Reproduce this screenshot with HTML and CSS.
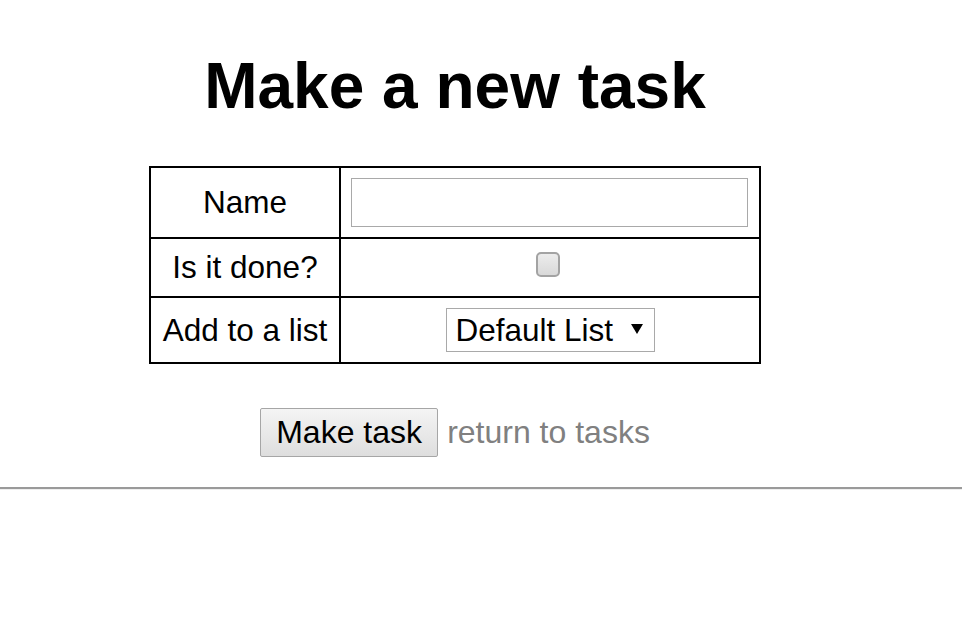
FILE: index.html
```html
<!DOCTYPE html>
<html lang="en">
<head>
<meta charset="utf-8">
<title>Make a new task</title>
<link rel="stylesheet" href="styles.css">
</head>
<body>
<main class="page">
  <h1 class="title">Make a new task</h1>
  <form class="task-form">
    <table class="task-table">
      <tr class="row-name">
        <td class="label">Name</td>
        <td class="field"><input class="text-input" type="text"></td>
      </tr>
      <tr class="row-done">
        <td class="label">Is it done?</td>
        <td class="field"><input class="check" type="checkbox"></td>
      </tr>
      <tr class="row-list">
        <td class="label">Add to a list</td>
        <td class="field"><span class="select-wrap"><select class="list-select"><option>Default List</option></select></span></td>
      </tr>
    </table>
    <div class="actions">
      <button class="submit" type="submit">Make task</button>
      <a class="back" href="#">return to tasks</a>
    </div>
  </form>
</main>
<hr class="rule">
</body>
</html>
```

FILE: styles.css
```css
html, body {
  margin: 0;
  padding: 0;
  background: #ffffff;
}

body {
  font-family: "Liberation Sans", Arial, sans-serif;
  color: #000;
}

.page {
  width: 910px;
  text-align: center;
}

.title {
  font-size: 64px;
  font-weight: bold;
  line-height: 74px;
  margin: 49px 0 43px;
}

.task-form {
  display: flex;
  flex-direction: column;
  align-items: center;
}

.task-table {
  width: 612px;
  border: 1px solid #000;
  border-spacing: 0;
  font-size: 31.5px;
}

.task-table td {
  border: 1px solid #000;
  box-sizing: border-box;
  padding: 0 10px;
  text-align: center;
  vertical-align: middle;
}

.task-table .label {
  width: 190px;
}

.row-name td { height: 71px; }
.row-done td { height: 59px; }
.row-list td { height: 66px; }

.text-input {
  display: block;
  box-sizing: border-box;
  width: 397px;
  height: 49px;
  margin: 0;
  border: 1px solid #a9a9a9;
  font: inherit;
  padding: 0 6px;
}

.check {
  appearance: none;
  -webkit-appearance: none;
  display: block;
  margin: -6px auto 0;
  width: 24px;
  height: 25px;
  box-sizing: border-box;
  border: 2px solid #a3a3a3;
  border-radius: 5px;
  background: linear-gradient(#ececec, #d9d9d9);
  position: relative;
  left: -2px;
}

.select-wrap {
  display: inline-block;
  position: relative;
  vertical-align: middle;
}

.select-wrap::after {
  content: "";
  position: absolute;
  right: 12px;
  top: 16px;
  border-left: 6px solid transparent;
  border-right: 6px solid transparent;
  border-top: 10px solid #000;
  pointer-events: none;
}

.list-select {
  appearance: none;
  -webkit-appearance: none;
  box-sizing: border-box;
  width: 209px;
  height: 44px;
  margin: 0;
  padding: 0 30px 0 9px;
  border: 1px solid #a9a9a9;
  border-radius: 0;
  background: #fff;
  font: inherit;
  color: #000;
}

.actions {
  display: flex;
  align-items: center;
  gap: 9px;
  margin-top: 44px;
  margin-bottom: 30px;
  font-size: 32px;
}

.submit {
  box-sizing: border-box;
  height: 49px;
  width: 178px;
  padding: 0;
  margin: 0;
  border: 1px solid #a6a6a6;
  border-radius: 2px;
  background: linear-gradient(#f4f4f4, #dedede);
  font: inherit;
  color: #000;
}

.back {
  color: #808080;
  text-decoration: none;
}

.rule {
  margin: 0;
  border: none;
  border-top: 2px solid #9a9a9a;
  border-bottom: 1px solid #eeeeee;
  height: 0;
}
```
